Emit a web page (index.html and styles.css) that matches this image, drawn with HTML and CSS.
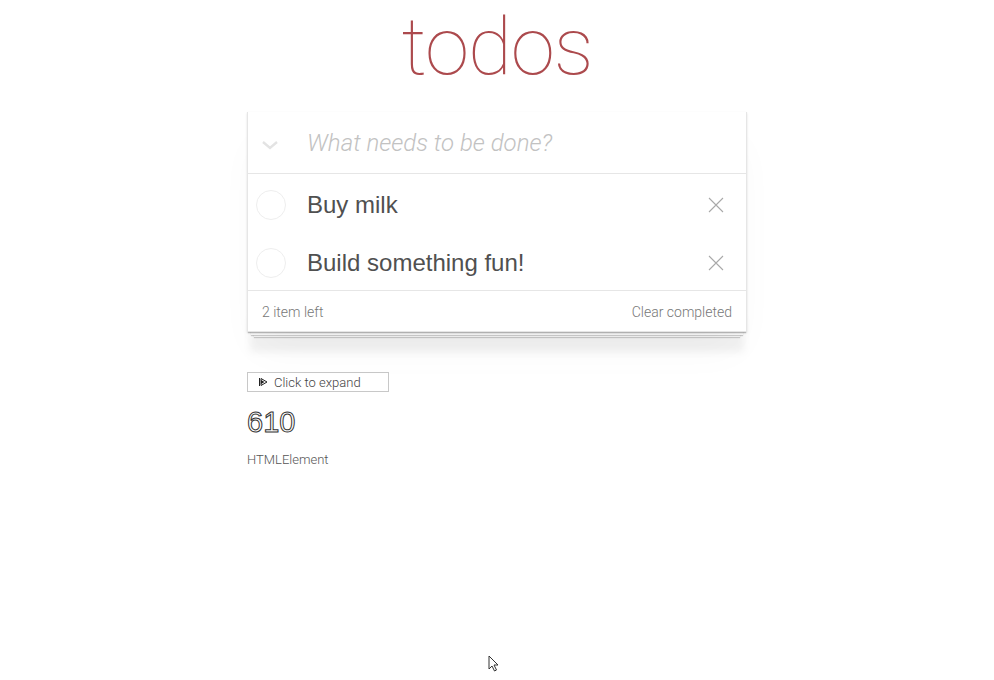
FILE: index.html
```
<!DOCTYPE html>
<html lang="en">
<head>
  <meta charset="UTF-8" />
  <title>todos</title>
  <link rel="stylesheet" href="styles.css">
</head>
<body>
  <section class="todoapp">
    <h1 class="title">todos</h1>

    <div class="panel">
      <div class="new-row">
        <span class="toggle-all">
          <svg width="18" height="10" viewBox="0 0 18 10"><path d="M2 2 L9 8 L16 2" fill="none" stroke="#e3e3e3" stroke-width="2.4"/></svg>
        </span>
        <input class="new-todo" type="text" placeholder="What needs to be done?">
      </div>

      <ul class="todo-list">
        <li class="todo">
          <span class="check"></span>
          <label>Buy milk</label>
          <span class="destroy">
            <svg width="16" height="16" viewBox="0 0 16 16"><path d="M1 1 L15 15 M15 1 L1 15" stroke="#a9a9a9" stroke-width="1.1"/></svg>
          </span>
        </li>
        <li class="todo">
          <span class="check"></span>
          <label>Build something fun!</label>
          <span class="destroy">
            <svg width="16" height="16" viewBox="0 0 16 16"><path d="M1 1 L15 15 M15 1 L1 15" stroke="#a9a9a9" stroke-width="1.1"/></svg>
          </span>
        </li>
      </ul>

      <div class="footer">
        <span class="count">2 item left</span>
        <span class="clear">Clear completed</span>
      </div>
    </div>

    <div class="debug">
      <button class="expand">
        <svg width="10" height="10" viewBox="0 0 10 10"><path d="M1.5 1 V9 M3 1.5 L9 5 L3 8.5 Z" fill="none" stroke="#222" stroke-width="1"/><path d="M3 3 L6.5 5 L3 7 Z" fill="#222"/></svg>
        Click to expand
      </button>
      <div class="big-num">610</div>
      <div class="type">HTMLElement</div>
    </div>
  </section>

  <svg class="cursor" width="12" height="18" viewBox="0 0 12 18"><path d="M1 1 L1 14 L4 11 L6.5 16 L8.5 15 L6 10 L10 10 Z" fill="#fff" stroke="#333" stroke-width="1"/></svg>
</body>
</html>
```

FILE: styles.css
```
* {
  box-sizing: border-box;
  margin: 0;
  padding: 0;
}

body {
  background: #fff;
  font-family: Roboto, "Liberation Sans", sans-serif;
  font-weight: 300;
  color: #4d4d4d;
  min-height: 680px;
}

.todoapp {
  width: 500px;
  margin: 0 auto;
}

.title {
  height: 112px;
  text-align: center;
  font-size: 80px;
  font-weight: 100;
  line-height: 94px;
  color: #ac4a4d;
  letter-spacing: -1px;
}

.panel {
  position: relative;
  background: #fff;
  border: 1px solid #e6e6e6;
  border-top: none;
  box-shadow: 0 1px 2px rgba(0, 0, 0, 0.12), 0 25px 40px -10px rgba(0, 0, 0, 0.04);
}

/* stacked paper under the list */
.panel::before {
  content: "";
  position: absolute;
  left: 0;
  right: 0;
  bottom: -1px;
  height: 40px;
  z-index: -1;
  box-shadow:
    0 1px 1px rgba(0, 0, 0, 0.2),
    0 6px 0 -3px #f8f8f8,
    0 7px 1px -3px rgba(0, 0, 0, 0.18),
    0 11px 0 -6px #f8f8f8,
    0 12px 1px -6px rgba(0, 0, 0, 0.18),
    0 22px 8px -2px #f2f2f2;
}

.new-row {
  display: flex;
  align-items: center;
  height: 62px;
  border-bottom: 1px solid #e6e6e6;
}

.toggle-all {
  width: 44px;
  display: flex;
  justify-content: center;
  padding-top: 4px;
}

.new-todo {
  flex: 1;
  margin-left: 15px;
  border: none;
  outline: none;
  font-family: Roboto, sans-serif;
  font-size: 24px;
  font-weight: 300;
  color: #4d4d4d;
  background: transparent;
}

.new-todo::placeholder {
  font-style: italic;
  color: #c2c2c2;
}

.todo-list {
  list-style: none;
}

.todo {
  display: flex;
  align-items: center;
  height: 58px;
  padding-top: 3px;
}

.check {
  width: 30px;
  height: 30px;
  margin: 0 21px 0 8px;
  border: 1px solid #eeeeee;
  border-radius: 50%;
}

.todo label {
  flex: 1;
  font-family: "Liberation Sans", sans-serif;
  font-weight: 400;
  font-size: 24px;
  color: #505050;
}

.destroy {
  width: 16px;
  height: 16px;
  margin-right: 22px;
  display: flex;
}

.footer {
  display: flex;
  justify-content: space-between;
  align-items: center;
  height: 41px;
  padding: 2px 14px 0 14px;
  border-top: 1px solid #e6e6e6;
  font-size: 14px;
  color: #777;
}

.debug {
  padding-top: 40px;
}

.expand {
  display: flex;
  align-items: center;
  gap: 6px;
  width: 142px;
  height: 20px;
  padding: 0 10px;
  background: #fff;
  border: 1px solid #c8c8c8;
  font-family: Roboto, sans-serif;
  font-weight: 300;
  font-size: 13px;
  color: #444;
}

.big-num {
  margin-top: 13px;
  font-family: "Liberation Sans", sans-serif;
  font-size: 29px;
  font-weight: 400;
  line-height: 34px;
  color: #fff;
  -webkit-text-stroke: 1px #333;
}

.type {
  margin-top: 13px;
  font-size: 13px;
  color: #555;
}

.cursor {
  position: absolute;
  left: 488px;
  top: 655px;
}
```
